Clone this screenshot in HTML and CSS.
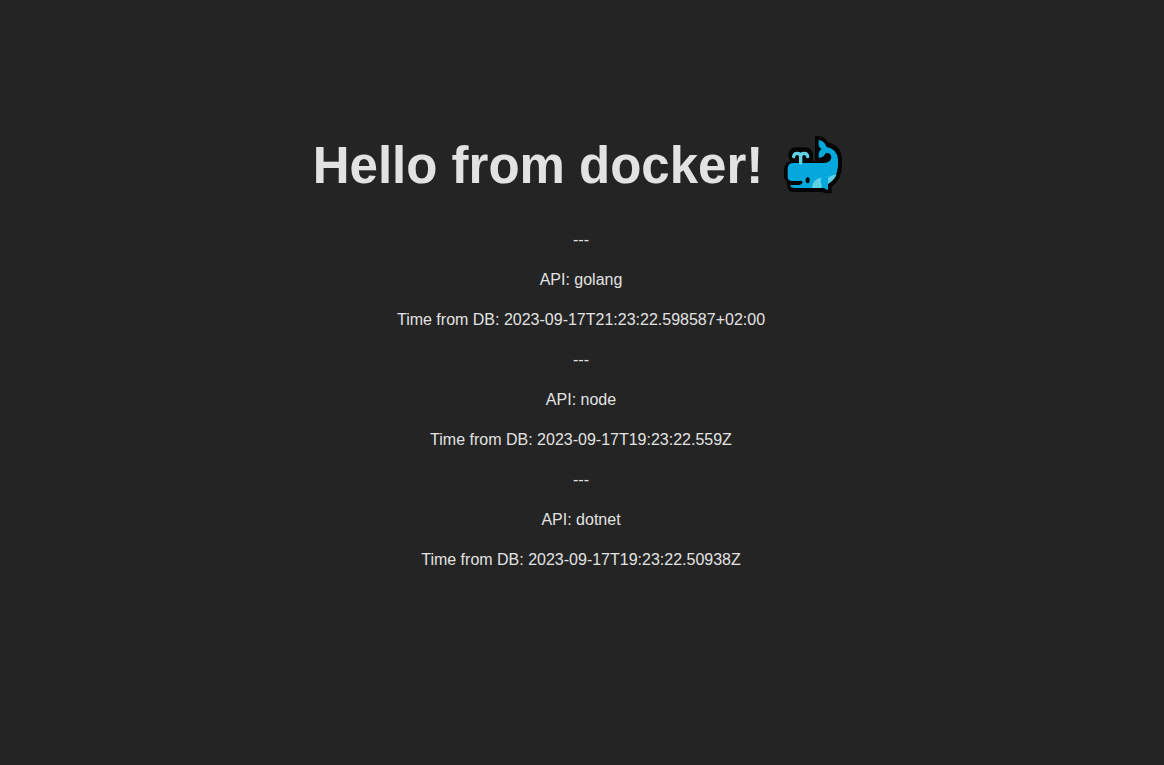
FILE: index.html
```html
<!DOCTYPE html>
<html lang="en">
<head>
<meta charset="utf-8">
<meta name="viewport" content="width=device-width, initial-scale=1">
<title>Hello from docker!</title>
<link rel="stylesheet" href="styles.css">
</head>
<body>
<main class="page">
  <h1 class="title">
    <span>Hello from docker!</span>
    <svg class="whale" viewBox="0 3 210 210" role="img" aria-label="Whale">
      <path class="whale-outline" d="M108 18 H119 Q138 20 147 37 Q187 46 189 88 V108 Q188 149 158 170 V190 H148 Q136 190 129 186 H42 Q25 185 24 166 V156 Q15 149 15 137 V117 Q17 99 34 94 Q27 83 28 72 Q32 53 50 52 H80 Q99 54 102 73 V92 H108 Z"/>
      <path class="whale-body" d="M119 30 Q137 33 143 51 Q173 56 177 88 V108 Q174 145 147 162 V178 L134 174 H46 Q35 174 34 165 H61 Q70 164 71 157 Q70 151 61 153 H39 Q27 153 26 141 V115 Q28 99 43 99 H137 Q157 96 157 82 Q156 69 143 68 Q137 71 135 78 Q126 84 119 83 V70 Q121 61 128 57 Q119 53 119 43 Z"/>
      <path class="whale-light" d="M99 174 Q100 148 128 142 V174 Z M145 163 V149 Q150 136 173 133 Q167 150 145 163 Z"/>
      <path class="whale-body" d="M128 141 H144 Q149 149 147 158 V180 Q134 176 129 165 Q122 153 128 141 Z"/>
      <path class="whale-spout" d="M44 80 Q45 70 54 70 Q65 70 65 81 V99 M86 80 Q85 70 76 70 Q65 70 65 81"/>
      <ellipse class="whale-outline" cx="86" cy="151" rx="6" ry="9"/>
    </svg>
  </h1>
  <p>---</p>
  <p>API: golang</p>
  <p>Time from DB: 2023-09-17T21:23:22.598587+02:00</p>
  <p>---</p>
  <p>API: node</p>
  <p>Time from DB: 2023-09-17T19:23:22.559Z</p>
  <p>---</p>
  <p>API: dotnet</p>
  <p>Time from DB: 2023-09-17T19:23:22.50938Z</p>
</main>
</body>
</html>
```
FILE: styles.css
```css
body {
  margin: 0;
  background: #242424;
  color: #e2e2e2;
  font-family: "Liberation Sans", Arial, sans-serif;
  font-size: 16px;
  line-height: 24px;
}

.page {
  padding: 131px 2px 32px 0;
  text-align: center;
}

.title {
  display: flex;
  justify-content: center;
  align-items: center;
  gap: 16px;
  margin: 0 0 27px;
  font-size: 51px;
  line-height: 56px;
}

.whale {
  flex: none;
  width: 70px;
  height: 70px;
}

.whale-outline {
  fill: #050505;
}

.whale-body {
  fill: #04a8dc;
}

.whale-light {
  fill: #5fd0e5;
}

.whale-spout {
  fill: none;
  stroke: #5fd0e5;
  stroke-width: 10;
  stroke-linecap: round;
}

p {
  margin: 0 0 16px;
}
```
